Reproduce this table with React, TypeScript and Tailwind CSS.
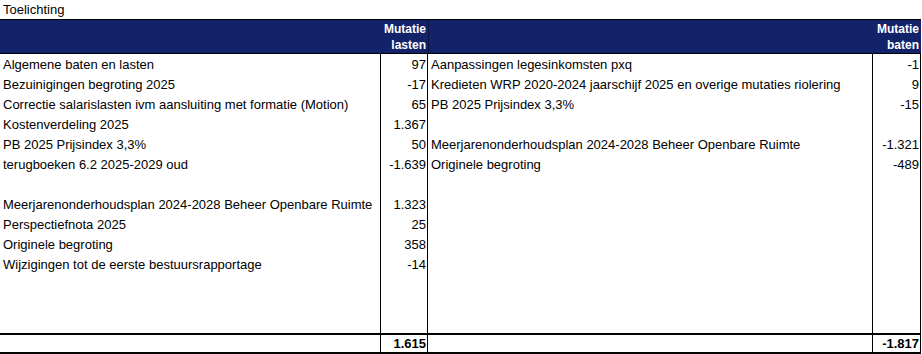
const lasten: [string, string][] = [
  ['Algemene baten en lasten', '97'],
  ['Bezuinigingen begroting 2025', '-17'],
  ['Correctie salarislasten ivm aansluiting met formatie (Motion)', '65'],
  ['Kostenverdeling 2025', '1.367'],
  ['PB 2025 Prijsindex 3,3%', '50'],
  ['terugboeken 6.2 2025-2029 oud', '-1.639'],
  ['', ''],
  ['Meerjarenonderhoudsplan 2024-2028 Beheer Openbare Ruimte', '1.323'],
  ['Perspectiefnota 2025', '25'],
  ['Originele begroting', '358'],
  ['Wijzigingen tot de eerste bestuursrapportage', '-14'],
];

const baten: [string, string][] = [
  ['Aanpassingen legesinkomsten pxq', '-1'],
  ['Kredieten WRP 2020-2024 jaarschijf 2025 en overige mutaties riolering', '9'],
  ['PB 2025 Prijsindex 3,3%', '-15'],
  ['', ''],
  ['Meerjarenonderhoudsplan 2024-2028 Beheer Openbare Ruimte', '-1.321'],
  ['Originele begroting', '-489'],
];

export default function App() {
  const rows = lasten.map((l, i) => ({ l, b: baten[i] ?? ['', ''] }));
  return (
    <div className="h-[354px] w-[922px] overflow-hidden bg-white text-[13px] leading-none text-black [font-family:'Liberation_Sans',Arial,sans-serif]">
      <div className="flex h-[19px] items-center pl-[3px]">Toelichting</div>

      <div className="w-[921px] border-t border-black">
        {/* header */}
        <div className="grid h-[33px] grid-cols-[380px_48px_444px_49px] bg-[#13236a] text-[12px] font-bold text-white">
          <div />
          <div className="flex flex-col items-end justify-center pr-[2px] leading-[16px]">
            <span>Mutatie</span>
            <span>lasten</span>
          </div>
          <div className="border-l border-[#0b1440]" />
          <div className="flex flex-col items-end justify-center pr-[2px] leading-[16px]">
            <span>Mutatie</span>
            <span>baten</span>
          </div>
        </div>

        <div className="grid grid-cols-[380px_48px_444px_49px] border-t border-black">
          {rows.map(({ l, b }, i) => (
            <div key={i} className="contents">
              <div className="flex h-[20px] items-center pl-[3px] whitespace-nowrap">{l[0]}</div>
              <div className="flex h-[20px] items-center justify-end border-x border-black pr-[1px]">{l[1]}</div>
              <div className="flex h-[20px] items-center pl-[3px] whitespace-nowrap">{b[0]}</div>
              <div className="flex h-[20px] items-center justify-end border-x border-black pr-[1px]">{b[1]}</div>
            </div>
          ))}
          <div className="h-[59px]" />
          <div className="h-[59px] border-x border-black" />
          <div className="h-[59px]" />
          <div className="h-[59px] border-x border-black" />
        </div>

        <div className="grid h-[21px] grid-cols-[380px_48px_444px_49px] border-y-2 border-black font-bold">
          <div />
          <div className="flex items-center justify-end border-x border-black pr-[1px]">1.615</div>
          <div />
          <div className="flex items-center justify-end border-x border-black pr-[1px]">-1.817</div>
        </div>
      </div>
    </div>
  );
}
